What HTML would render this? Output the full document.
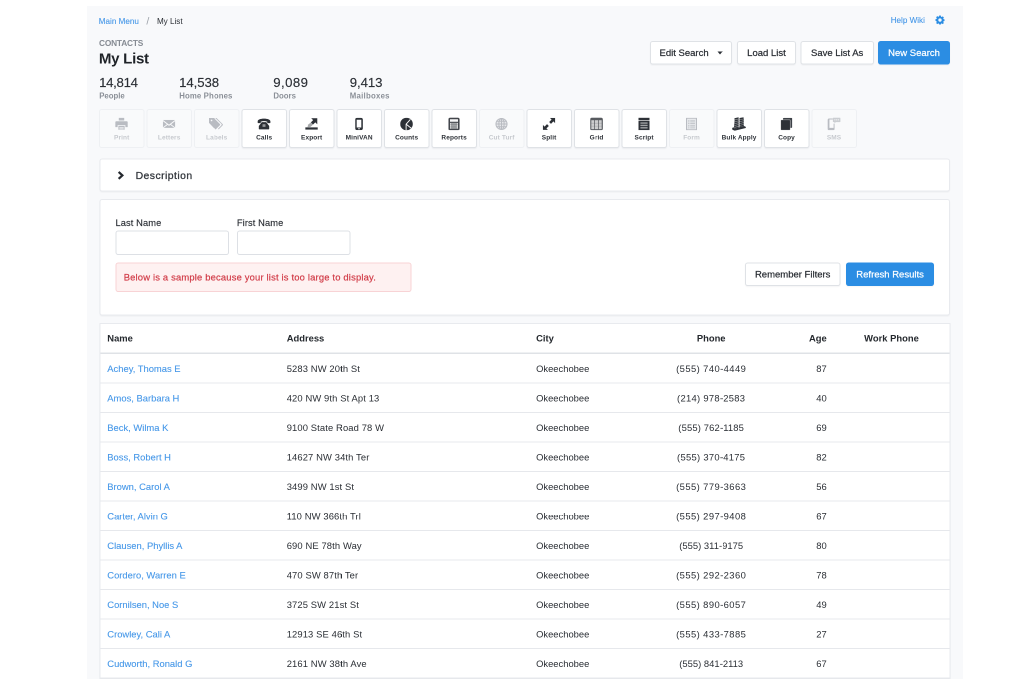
<!DOCTYPE html>
<html lang="en">
<head>
<meta charset="utf-8">
<title>My List</title>
<style>
*{box-sizing:border-box;margin:0;padding:0}
html,body{width:1024px;height:689px;overflow:hidden;background:#fff}
body{font-family:"Liberation Sans",sans-serif;color:#2a2e34}
.wrap{position:absolute;left:0;top:0;transform:scale(.5);transform-origin:0 0;will-change:transform}

.page{position:absolute;left:174px;top:12px;width:1751px;height:1345.2px;background:#f8f9fb;font-size:18.8px;overflow:hidden}
.page>*{position:absolute}
.inner{left:0.6px;top:1.2px;width:1750px;height:1344px}
.inner>*{position:absolute}
.lnk{color:#4597e8;text-decoration:none;-webkit-text-stroke:0.2px currentColor}
.crumbs{left:23px;top:17.8px;font-size:16.2px;white-space:nowrap;line-height:20px}
.crumbs .sep{color:#9a9fa7;margin:0 15.2px 0 15.2px;font-size:21px;line-height:20px;position:relative;top:1.4px}
.crumbs .cur{color:#2a2e34}
.help{left:1606.8px;top:17.2px;font-size:16.2px;line-height:20px;white-space:nowrap}
.help .gear{position:absolute;left:89.6px;top:0.4px}
.eyebrow{left:23.4px;top:64.4px;font-size:16.6px;font-weight:700;color:#858a92;letter-spacing:-0.34px;line-height:18px;white-space:nowrap}
.title{left:23.2px;top:86px;font-size:30.2px;font-weight:700;color:#1f2328;line-height:36px;letter-spacing:-0.6px}
.btn{position:absolute;display:block;height:46.4px;line-height:43.2px;border:2px solid #dfe2e6;border-radius:5.2px;background:#fff;color:#2a2e34;font-size:19px;text-align:center;white-space:nowrap;-webkit-text-stroke:0.44px currentColor;box-shadow:0 1.2px 2.4px rgba(30,40,60,.05)}
.btn.pri{background:#2b8de3;border-color:#2b8de3;color:#fff}
.hbtns{left:0;top:0}
.b1{left:1125.6px;top:69px;width:164.2px;text-align:left;padding-left:16.8px}
.b2{left:1299.4px;top:69px;width:117.8px}
.b3{left:1426.4px;top:69px;width:146.6px}
.b4{left:1581.8px;top:69px;width:143.4px}
.caret{position:absolute;left:132.4px;top:19px;border-left:5.8px solid transparent;border-right:5.8px solid transparent;border-top:6.2px solid #2a2e34}
.stat{top:0}
.stat{margin-left:-174.6px}
.stat .num{position:absolute;top:136.8px;left:-0.8px;font-size:26.4px;line-height:30px;color:#2a2e34;letter-spacing:-0.7px;white-space:nowrap;-webkit-text-stroke:0.28px currentColor}
.stat .lbl{position:absolute;top:169.4px;left:-0.6px;font-size:15.6px;font-weight:700;color:#8a8f97;line-height:18px;white-space:nowrap}
.tools{left:-174.6px;top:205.2px}
.tool{position:absolute;top:0;width:91.2px;height:77.8px;margin-left:-1.6px;box-shadow:0 1.2px 2.4px rgba(30,40,60,.06);border:2px solid #dfe2e6;border-radius:5.2px;background:#fff;color:#2d3137}
.tool .ic{position:absolute;left:50%;top:27.2px;transform:translate(-50%,-50%)}
.tool span{position:absolute;left:-8px;right:-8px;top:46.6px;text-align:center;font-size:13px;font-weight:700;line-height:16px;white-space:nowrap;letter-spacing:0.24px}
.tool.dis{background:#f9fafb;border-color:#eef0f3;color:#b9bcc2;box-shadow:none}
.tool.dis span{color:#c6c9ce}
.panel{background:#fff;border:2px solid #e8eaee;border-radius:5.2px;box-shadow:0 1.2px 2.4px rgba(30,40,60,.05)}
.desc{left:24.4px;top:303.8px;width:1701.2px;height:66.4px}
.desc .chev{position:absolute;left:33.2px;top:22.6px}
.desc span{position:absolute;left:70.2px;top:19.8px;font-size:20.8px;line-height:24px;color:#33373d;letter-spacing:0.92px}
.filt{left:24.4px;top:385.2px;width:1701.2px;height:232.4px}
.filt label{position:absolute;top:34.4px;font-size:18.6px;line-height:22px;color:#2a2e34;white-space:nowrap;letter-spacing:0.2px;-webkit-text-stroke:0.28px currentColor}
.l1{left:30px}.l2{left:272.8px}
.inp{position:absolute;top:61px;width:227.2px;height:48.4px;border:2px solid #dde0e5;border-radius:5.2px;background:#fff}
.i1{left:30px}.i2{left:272.8px}
.alert{position:absolute;left:30px;top:124.4px;width:592.4px;height:59.2px;border:2px solid #f8d3d5;border-radius:5.2px;background:#fef1f1;color:#d13c48;font-size:18.8px;line-height:55.2px;padding-left:14.4px;white-space:nowrap;letter-spacing:0.36px}
.rf{left:1289.2px;top:124.8px;width:190.4px}
.rr{left:1491.2px;top:124.8px;width:176px}
.tbl{left:24.4px;top:632.8px;width:1702.2px;height:713.6px;border-bottom:none;border-radius:1.2px 1.2px 0 0}
.tr{position:absolute;left:0;right:0;height:59px;border-bottom:2px solid #e6e8ec;font-size:18.8px;line-height:22px}
.tr span{position:absolute;top:18.8px;white-space:nowrap}
.th{top:0;height:60.4px;border-bottom:3.2px solid #dfe2e6;font-weight:700;color:#24282d}
.th span{top:18.2px}
.c1{left:13.6px}.c2{left:373.2px}.c3{left:871.2px}
.c4{left:1121.4px;width:200px;text-align:center}
.c5{left:1350.4px;width:102px;text-align:right}
.c6{left:1482px;width:200px;text-align:center}
.tr .c4{letter-spacing:0.84px}
.th .c4{letter-spacing:0}
.alert{-webkit-text-stroke:0.4px currentColor}
.desc span{-webkit-text-stroke:0.6px currentColor}
.tr .c2{letter-spacing:0.24px;margin-left:-0.8px}
.th .c2{letter-spacing:0}

</style>
</head>
<body>
<div class="wrap">
<div class="page"><div class="inner">
<div class="crumbs"><a class="lnk">Main Menu</a><span class="sep">/</span><span class="cur">My List</span></div>
<div class="help"><a class="lnk">Help Wiki</a><svg class="gear" style="width:18px;height:18px" viewBox="0 0 16 16"><path fill="#2b8de3" d="M6.6 0h2.8l.4 2.1 1.3.55 1.8-1.2 2 2-1.2 1.8.55 1.3 2.1.4v2.8l-2.1.4-.55 1.3 1.2 1.8-2 2-1.8-1.2-1.3.55-.4 2.1H6.6l-.4-2.1-1.3-.55-1.8 1.2-2-2 1.2-1.8-.55-1.3L-.35 9.4V6.6l2.1-.4.55-1.3-1.2-1.8 2-2 1.8 1.2 1.3-.55zM8 5a3 3 0 100 6 3 3 0 000-6z"/></svg></div>
<div class="eyebrow">CONTACTS</div>
<h1 class="title">My List</h1>
<div class="hbtns"><span class="btn b1">Edit Search<i class="caret"></i></span><span class="btn b2">Load List</span><span class="btn b3">Save List As</span><span class="btn b4 pri">New Search</span></div>
<div class="stat" style="left:199px"><div class="num" style="letter-spacing:-0.6px">14,814</div><div class="lbl" style="letter-spacing:0px">People</div></div>
<div class="stat" style="left:359px"><div class="num" style="letter-spacing:-0.16px">14,538</div><div class="lbl" style="letter-spacing:0.24px">Home Phones</div></div>
<div class="stat" style="left:547.4px"><div class="num" style="letter-spacing:0.8px">9,089</div><div class="lbl" style="letter-spacing:0px">Doors</div></div>
<div class="stat" style="left:700.2px"><div class="num" style="letter-spacing:-0.1px">9,413</div><div class="lbl" style="letter-spacing:0.5px">Mailboxes</div></div>
<div class="tools">
<div class="tool dis" style="left:199.4px"><svg class="ic" style="width:25.6px;height:24.8px" viewBox="0 0 16 16" fill="currentColor"><path d="M4.5 0h7v3.5h-7z"/><path d="M1.2 4.5h13.6a1.2 1.2 0 011.2 1.2V12h-3V9.5H3V12H0V5.700a1.200 1.200 0 011.200-1.200z"/><path d="M4 10.500h8V16H4z"/><path d="M5.200 12h5.600v.9H5.200zM5.200 13.800h5.600v.9H5.200z" fill="#f9fafb"/></svg><span>Print</span></div>
<div class="tool dis" style="left:294.38px"><svg class="ic" style="width:24.6px;height:16.4px" viewBox="0 0 18 12" fill="currentColor"><path d="M0 0h18L9 7z"/><path d="M0 1.800L6 6.400 0 11zM18 1.800L12 6.400 18 11zM7 7.200L9 8.700 11 7.200 17.300 12H.7z"/></svg><span>Letters</span></div>
<div class="tool dis" style="left:389.36px"><svg class="ic" style="width:30px;height:24px" viewBox="0 0 20 16" fill="currentColor"><path d="M0 0h6.500l8 8a1.200 1.200 0 010 1.700l-5 5a1.200 1.200 0 01-1.700 0L0 6.500zM2.300 3.300a1.100 1.100 0 102.200 0 1.100 1.100 0 00-2.200 0z" fill-rule="evenodd"/><path d="M8.300 0H10l8.200 8.200a1.200 1.200 0 010 1.700l-5.300 5.300-.9-.9 4.600-4.600a1.200 1.200 0 000-1.700z"/></svg><span>Labels</span></div>
<div class="tool" style="left:484.34px"><svg class="ic" style="width:25.6px;height:23.2px" viewBox="0 0 19 16" fill="currentColor"><path d="M9.500 0C4.200 0 0 1.600 0 3.900v1.900c0 .6.400.9 1 .9h2.700c.6 0 1-.3 1-.9V4.600c1.300-.5 3-.8 4.800-.8s3.500.3 4.800.8v1.200c0 .6.400.9 1 .9H18c.6 0 1-.3 1-.9V3.900C19 1.600 14.800 0 9.500 0z"/><path d="M6.200 5.300h6.600l4.400 5.600V15a1 1 0 01-1 1H2.800a1 1 0 01-1-1v-4.100z"/><path d="M7.300 8.300h4.400v4H7.300z" fill="#fff" opacity=".5"/></svg><span>Calls</span></div>
<div class="tool" style="left:579.32px"><svg class="ic" style="width:25.4px;height:23.4px" viewBox="0 0 17 16" fill="currentColor"><path d="M0 12.600h17V16H0z"/><path d="M8 0H16.400v8.400l-2.700-2.700-3 3-3-3 3-3z"/><path d="M7.700 5.700l3 3-3.400 3.300-4.300.4.900-3.500z" opacity=".42"/></svg><span>Export</span></div>
<div class="tool" style="left:674.3px"><svg class="ic" style="width:15.4px;height:25.4px" viewBox="0 0 10 16" fill="currentColor"><path d="M2.400 0h5.200A2.400 2.400 0 0110 2.400v11.200A2.400 2.400 0 017.600 16H2.400A2.400 2.400 0 010 13.600V2.400A2.400 2.400 0 012.400 0zM2 2.400v10.200h6V2.400zM4 13.600v1.200h2v-1.200z" fill-rule="evenodd"/></svg><span>MiniVAN</span></div>
<div class="tool" style="left:769.28px"><svg class="ic" style="width:25.6px;height:25.2px" viewBox="0 0 16 16" fill="currentColor"><circle cx="8" cy="8" r="8"/><path d="M12.900 2.200L7.500 8.200V16" fill="none" stroke="#fff" stroke-width="1.150"/><path d="M7.500 8.200l6.300 5" fill="none" stroke="#fff" stroke-width="1.150"/></svg><span>Counts</span></div>
<div class="tool" style="left:864.26px"><svg class="ic" style="width:22.4px;height:25.6px" viewBox="0 0 14 16" fill="currentColor"><path d="M2.400 0h9.200A2.400 2.400 0 0114 2.400v11.200a2.400 2.400 0 01-2.400 2.400H2.400A2.400 2.400 0 010 13.600V2.400A2.400 2.400 0 012.400 0z" opacity=".9"/><path d="M2 2.100h10v3.100H2z" fill="#fff" opacity=".96"/><path d="M2 6.600h10V14H2z" fill="#fff" opacity=".78"/><path d="M4 6.600h1V14H4zM6.500 6.600h1V14h-1zM9 6.600h1V14H9z" opacity=".8"/><path d="M2 8.800h10v.5H2zM2 11.400h7.200v.5H2z" opacity=".4"/></svg><span>Reports</span></div>
<div class="tool dis" style="left:959.24px"><svg class="ic" style="width:24.4px;height:24.4px" viewBox="0 0 16 16" fill="currentColor"><circle cx="8" cy="8" r="7.700" opacity=".3"/><g fill="none" stroke="currentColor" stroke-width="1.300"><circle cx="8" cy="8" r="7.300"/><ellipse cx="8" cy="8" rx="3.500" ry="7.300"/><path d="M8 .7v14.600M.7 8h14.600M1.700 4.400h12.600M1.700 11.600h12.600"/></g></svg><span>Cut Turf</span></div>
<div class="tool" style="left:1054.22px"><svg class="ic" style="width:25.4px;height:24.4px" viewBox="0 0 16 16" fill="currentColor"><path d="M9.200 0H16v6.800l-2.200-2.200-3.200 3.200-2.400-2.400 3.200-3.200zM6.800 16H0V9.200l2.200 2.200 3.200-3.200 2.400 2.400-3.200 3.200z"/></svg><span>Split</span></div>
<div class="tool" style="left:1149.2px"><svg class="ic" style="width:25.4px;height:25.6px" viewBox="0 0 16 16" fill="currentColor"><g opacity=".8"><path d="M2.400 0h11.200A2.400 2.400 0 0116 2.400v11.200a2.400 2.400 0 01-2.400 2.400H2.400A2.400 2.400 0 010 13.600V2.400A2.400 2.400 0 012.400 0zM1.500 3.300v11.200h3.500V3.300zM5.900 3.300v11.200h4.200V3.300zM11 3.300v11.200h3.500V3.300z" fill-rule="evenodd"/><path d="M1.500 3.300h13v11.200h-13z" opacity=".3"/><path d="M1.500 6.600h13v.7h-13zM1.500 10.300h13v.7h-13z" opacity=".35"/></g></svg><span>Grid</span></div>
<div class="tool" style="left:1244.18px"><svg class="ic" style="width:22px;height:25.6px" viewBox="0 0 14 16" fill="currentColor"><path d="M0 0h14v3H0z"/><path d="M0 3.900h14V16H0z"/><path d="M2.400 6h9.200v1.700H2.400zM2.400 9h9.200v1.700H2.400zM2.400 12h9.200v1.700H2.400z" fill="#fff" opacity=".55"/></svg><span>Script</span></div>
<div class="tool dis" style="left:1339.16px"><svg class="ic" style="width:22.6px;height:25.2px" viewBox="0 0 14 16" fill="currentColor"><path d="M0 0h14v16H0zM1.400 1.400v13.200h11.200V1.400z" fill-rule="evenodd"/><path d="M1.400 1.400h11.200v13.200H1.400z" opacity=".25"/><path d="M2.600 3.200h1.800v1.800H2.600zM5.400 3.200h6v1.800h-6zM2.600 6.300h1.800v1.800H2.600zM5.400 6.300h6v1.800h-6zM2.600 9.400h1.800v1.800H2.600zM5.400 9.400h6v1.800h-6zM2.600 12.300h1.800v1.300H2.600zM5.400 12.300h6v1.300h-6z" opacity=".75"/></svg><span>Form</span></div>
<div class="tool" style="left:1434.14px"><svg class="ic" style="width:28px;height:27.2px" viewBox="0 0 16 16" fill="currentColor"><path d="M2.600 1.200L7.600 0v12.200L2.400 13.600C1.800 9.500 3.300 5.300 2.600 1.200z"/><path d="M8.600.9L13.400 0c.7 3.900-.4 7.700.5 11.500l-5.300 1.400z"/><g fill="#fff" opacity=".5"><path d="M2.800 2.900l4.800-1.200v.65L2.900 3.550zM3 5.100l4.600-1.200v.65L3 5.750zM2.900 7.300l4.700-1.200v.65L2.850 7.950zM2.700 9.500l4.900-1.200v.65l-4.950 1.200zM2.500 11.700l5.100-1.300v.65l-5.150 1.300zM8.600 2.800l5-1.200v.65l-5 1.200zM8.600 5l5-1.200v.65l-5 1.200zM8.600 7.200l4.900-1.200v.65l-4.900 1.200zM8.600 9.400l4.900-1.300v.65l-4.900 1.300zM8.600 11.600l5.100-1.400v.65l-5.100 1.400z"/></g><path d="M0 12.500l2.400-.7v1.800l11.500-3.200 2.100 1v1.300L2.800 16 0 14.400z"/></svg><span>Bulk Apply</span></div>
<div class="tool" style="left:1529.12px"><svg class="ic" style="width:23.2px;height:25.2px" viewBox="0 0 15 16" fill="currentColor"><rect x="3" y="0" width="12" height="13" rx="1.100" opacity=".92"/><rect x="0" y="2.600" width="12.400" height="13.400" rx="1.100" stroke="#fff" stroke-width=".9" stroke-opacity=".55"/></svg><span>Copy</span></div>
<div class="tool dis" style="left:1624.1px"><svg class="ic" style="width:25.6px;height:25.6px" viewBox="0 0 16 16" fill="currentColor"><path d="M1.900 1.200h4.600v1.200H2.300v10.400h5.200V7.600h1.200v6.500A1.900 1.900 0 016.800 16H1.900A1.900 1.900 0 010 14.100V3.100a1.900 1.900 0 011.900-1.900zM3.600 13.800h1.800v1H3.600z"/><path d="M7.400 0h7.800a.8.800 0 01.8.8v4a.8.800 0 01-.8.800h-4.800L8.600 7V5.600H7.400A.8.800 0 016.600 4.800V.8A.8.800 0 017.400 0z" opacity=".72"/><path d="M8.400 2.100h1.400v1.400H8.400zM10.600 2.100H12v1.400h-1.400zM12.800 2.100h1.400v1.400h-1.400z" fill="#fff" opacity=".7"/></svg><span>SMS</span></div>
</div>
<div class="panel desc"><svg class="chev" viewBox="0 0 10 12" style="width:14.8px;height:17.6px"><path d="M2.200 1.300 L7.300 6 L2.200 10.700" fill="none" stroke="#24282e" stroke-width="3"/></svg><span>Description</span></div>
<div class="panel filt">
<label class="l1">Last Name</label><label class="l2">First Name</label>
<span class="inp i1"></span><span class="inp i2"></span>
<div class="alert">Below is a sample because your list is too large to display.</div>
<span class="btn rf">Remember Filters</span><span class="btn rr pri">Refresh Results</span>
</div>
<div class="panel tbl">
<div class="tr th"><span class="c1">Name</span><span class="c2">Address</span><span class="c3">City</span><span class="c4">Phone</span><span class="c5">Age</span><span class="c6">Work Phone</span></div>
<div class="tr" style="top:60.4px"><span class="c1"><a class="lnk">Achey, Thomas E</a></span><span class="c2">5283 NW 20th St</span><span class="c3">Okeechobee</span><span class="c4" style="letter-spacing:0.84px">(555) 740-4449</span><span class="c5">87</span><span class="c6"></span></div>
<div class="tr" style="top:119.4px"><span class="c1"><a class="lnk">Amos, Barbara H</a></span><span class="c2">420 NW 9th St Apt 13</span><span class="c3">Okeechobee</span><span class="c4" style="letter-spacing:0.58px">(214) 978-2583</span><span class="c5">40</span><span class="c6"></span></div>
<div class="tr" style="top:178.4px"><span class="c1"><a class="lnk">Beck, Wilma K</a></span><span class="c2">9100 State Road 78 W</span><span class="c3">Okeechobee</span><span class="c4" style="letter-spacing:0.32px">(555) 762-1185</span><span class="c5">69</span><span class="c6"></span></div>
<div class="tr" style="top:237.4px"><span class="c1"><a class="lnk">Boss, Robert H</a></span><span class="c2">14627 NW 34th Ter</span><span class="c3">Okeechobee</span><span class="c4" style="letter-spacing:0.58px">(555) 370-4175</span><span class="c5">82</span><span class="c6"></span></div>
<div class="tr" style="top:296.4px"><span class="c1"><a class="lnk">Brown, Carol A</a></span><span class="c2">3499 NW 1st St</span><span class="c3">Okeechobee</span><span class="c4" style="letter-spacing:0.84px">(555) 779-3663</span><span class="c5">56</span><span class="c6"></span></div>
<div class="tr" style="top:355.4px"><span class="c1"><a class="lnk">Carter, Alvin G</a></span><span class="c2">110 NW 366th Trl</span><span class="c3">Okeechobee</span><span class="c4" style="letter-spacing:0.84px">(555) 297-9408</span><span class="c5">67</span><span class="c6"></span></div>
<div class="tr" style="top:414.4px"><span class="c1"><a class="lnk">Clausen, Phyllis A</a></span><span class="c2">690 NE 78th Way</span><span class="c3">Okeechobee</span><span class="c4" style="letter-spacing:0.06px">(555) 311-9175</span><span class="c5">80</span><span class="c6"></span></div>
<div class="tr" style="top:473.4px"><span class="c1"><a class="lnk">Cordero, Warren E</a></span><span class="c2">470 SW 87th Ter</span><span class="c3">Okeechobee</span><span class="c4" style="letter-spacing:0.84px">(555) 292-2360</span><span class="c5">78</span><span class="c6"></span></div>
<div class="tr" style="top:532.4px"><span class="c1"><a class="lnk">Cornilsen, Noe S</a></span><span class="c2">3725 SW 21st St</span><span class="c3">Okeechobee</span><span class="c4" style="letter-spacing:0.84px">(555) 890-6057</span><span class="c5">49</span><span class="c6"></span></div>
<div class="tr" style="top:591.4px"><span class="c1"><a class="lnk">Crowley, Cali A</a></span><span class="c2">12913 SE 46th St</span><span class="c3">Okeechobee</span><span class="c4" style="letter-spacing:0.84px">(555) 433-7885</span><span class="c5">27</span><span class="c6"></span></div>
<div class="tr" style="top:650.4px"><span class="c1"><a class="lnk">Cudworth, Ronald G</a></span><span class="c2">2161 NW 38th Ave</span><span class="c3">Okeechobee</span><span class="c4" style="letter-spacing:0.06px">(555) 841-2113</span><span class="c5">67</span><span class="c6"></span></div>
</div>
</div></div>
</div>
</body>
</html>
